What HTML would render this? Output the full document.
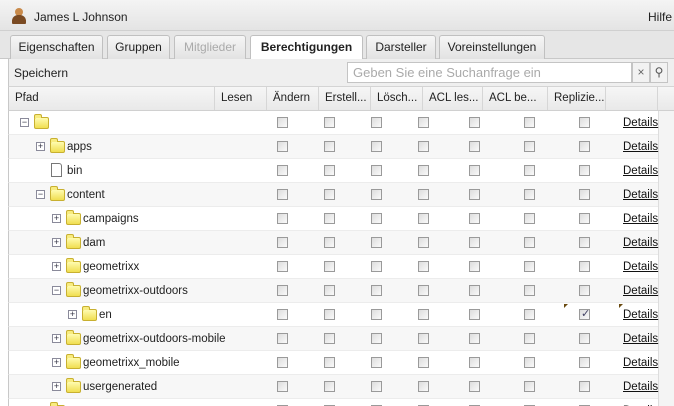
<!DOCTYPE html><html><head><meta charset="utf-8"><style>
*{box-sizing:border-box}html,body{margin:0;width:674px;height:406px;overflow:hidden}body{background:#fff;font-family:"Liberation Sans",sans-serif;font-size:12px;color:#222;position:relative}
.a{position:absolute}
.hdr{left:0;top:0;width:674px;height:31px;background:linear-gradient(#f4f4f4,#e4e4e4);border-bottom:1px solid #d0d0d0}
.tabs{left:0;top:31px;width:674px;height:28px;background:#e6e6e6;border-bottom:1px solid #c8c8c8}
.tab{position:absolute;top:2px;height:24px;border:1px solid #c0c0c0;border-bottom:none;background:linear-gradient(#f6f6f6,#e2e2e2);border-radius:3px 3px 0 0;text-align:center;line-height:22px;font-size:12px}
.tb{left:8px;top:59px;width:666px;height:28px;background:#efefef;border-bottom:1px solid #d4d4d4;border-left:1px solid #c8c8c8}
.th{left:8px;top:87px;width:666px;height:24px;background:linear-gradient(#f6f6f6,#e9e9e9);border-bottom:1px solid #d0d0d0;border-left:1px solid #c8c8c8}
.hc{position:absolute;top:0;height:23px;line-height:23px;border-right:1px solid #d6d6d6;padding-left:6px;font-size:11.5px}
.row{position:absolute;left:8px;width:650px;height:24px;border-bottom:1px solid #ececec;border-left:1px solid #c8c8c8}
.cb{position:absolute;width:11px;height:11px;border:1px solid #9a9a9a;background:linear-gradient(135deg,#ddd,#fafafa);top:6px}
.det{position:absolute;left:614px;top:6px;text-decoration:underline;font-size:11.5px;color:#111}
.ex{position:absolute;width:9px;height:9px;border:1px solid #8a8a9a;background:#fff;top:7px;font-size:9px;line-height:6px;text-align:center;color:#334}
.fo{position:absolute;top:6px;width:15px;height:12px;background:linear-gradient(#fffbb0,#f0de50);border:1px solid #c8b030;border-radius:2px}
.fo:before{content:"";position:absolute;left:-1px;top:-4px;width:6px;height:3px;background:#f8ec80;border:1px solid #c8b030;border-bottom:none;border-radius:2px 2px 0 0}
.lb{position:absolute;top:6px;font-size:11.5px}
</style></head><body>
<div class="a hdr"></div>
<div class="a" style="left:12px;top:8px;width:14px;height:16px"><div style="position:absolute;left:3px;top:0;width:8px;height:8px;border-radius:50%;background:#c98a4a"></div><div style="position:absolute;left:0;top:7px;width:14px;height:9px;border-radius:6px 6px 1px 1px;background:#7a4a22"></div></div>
<div class="a" style="left:34px;top:10px;font-size:12px">James L Johnson</div>
<div class="a" style="left:648px;top:10px;font-size:12px">Hilfe</div>
<div class="a tabs"></div>
<div class="a" style="left:0;top:33px;width:674px;height:26px">
<div class="tab" style="left:10px;width:93px">Eigenschaften</div>
<div class="tab" style="left:107px;width:63px">Gruppen</div>
<div class="tab" style="left:174px;width:72px;color:#aaa">Mitglieder</div>
<div class="tab" style="left:250px;width:113px;background:#fff;font-weight:bold;height:26px">Berechtigungen</div>
<div class="tab" style="left:366px;width:70px">Darsteller</div>
<div class="tab" style="left:439px;width:106px">Voreinstellungen</div>
</div>
<div class="a tb"><div class="a" style="left:5px;top:7px">Speichern</div>
<div class="a" style="left:338px;top:3px;width:285px;height:21px;border:1px solid #c4c4c4;background:#fff;color:#aaa;padding-left:5px;line-height:19px;font-size:13px">Geben Sie eine Suchanfrage ein</div>
<div class="a" style="left:623px;top:3px;width:18px;height:21px;border:1px solid #c4c4c4;background:#f2f2f2;text-align:center;line-height:19px;color:#666">×</div>
<div class="a" style="left:641px;top:3px;width:18px;height:21px;border:1px solid #c4c4c4;background:#f2f2f2;text-align:center;line-height:19px;color:#555">⚲</div></div>
<div class="a th">
<div class="hc" style="left:0;width:206px">Pfad</div>
<div class="hc" style="left:206px;width:52px">Lesen</div>
<div class="hc" style="left:258px;width:52px">Ändern</div>
<div class="hc" style="left:310px;width:52px">Erstell...</div>
<div class="hc" style="left:362px;width:52px">Lösch...</div>
<div class="hc" style="left:414px;width:60px">ACL les...</div>
<div class="hc" style="left:474px;width:65px">ACL be...</div>
<div class="hc" style="left:539px;width:58px">Replizie...</div>
<div class="hc" style="left:597px;width:52px"></div>
<div class="hc" style="left:649px;width:17px"></div>
</div>
<div class="a" style="left:658px;top:111px;width:16px;height:295px;background:#f4f4f4;border-left:1px solid #ddd"></div>
<div id="rows"></div>
<script>
var R=[[0,'-','',1],[1,'+','apps',1],[1,'','bin',0],[1,'-','content',1],[2,'+','campaigns',1],[2,'+','dam',1],[2,'+','geometrixx',1],[2,'-','geometrixx-outdoors',1],[3,'+','en',1],[2,'+','geometrixx-outdoors-mobile',1],[2,'+','geometrixx_mobile',1],[2,'+','usergenerated',1],[1,'+','',1]];
var cx=[282,329,376,423,474,529,584],h='';
R.forEach(function(r,i){var y=111+24*i,bg=i%2?'#f7f7f7':'#fff';h+='<div class="row" style="top:'+y+'px;background:'+bg+'">';
var ex=11+16*r[0],fx=25+16*r[0];
if(r[1])h+='<div class="ex" style="left:'+ex+'px">'+(r[1]=='+'?'+':'−')+'</div>';
if(r[3])h+='<div class="fo" style="left:'+fx+'px"></div>';else h+='<div style="position:absolute;left:'+(fx+1)+'px;top:4px;width:11px;height:14px;border:1px solid #777;background:#fff;border-radius:0 3px 0 0"></div>';
if(r[2])h+='<div class="lb" style="left:'+(fx+17)+'px">'+r[2]+'</div>';
cx.forEach(function(c,j){var ck=(i==8&&j==6);h+='<div class="cb" style="left:'+(c-8-6)+'px">'+(ck?'<span style="position:absolute;left:1px;top:-3px;font-size:11px;color:#446">✓</span>':'')+'</div>'});
if(i==8)h+='<div style="position:absolute;left:555px;top:1px;border-left:4px solid #6a4a10;border-bottom:4px solid transparent"></div><div style="position:absolute;left:610px;top:1px;border-left:4px solid #6a4a10;border-bottom:4px solid transparent"></div>';
h+='<div class="det">Details</div></div>'});
document.getElementById('rows').innerHTML=h;
</script>
</body></html>
